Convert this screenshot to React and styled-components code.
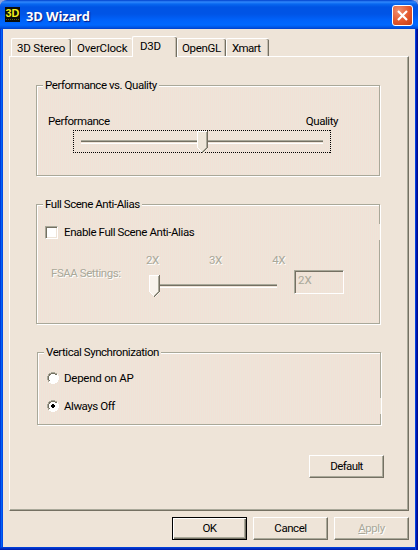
import React from 'react';
import styled, { createGlobalStyle, css } from 'styled-components';

const face = '#eee4d8';
const shade = '#a9a899';
const darkShade = '#747062';
const stripes = `#f1e1d6 url('data:image/svg+xml,<svg xmlns="http://www.w3.org/2000/svg" width="4" height="4" shape-rendering="crispEdges"><path d="M0 0h1v4h-1zM2 0h1v4h-1z" fill="%23ede5d9"/></svg>') 0 0 / 4px 4px`;

const GlobalStyle = createGlobalStyle`
  body {
    margin: 0;
    background: #8fa3dc;
    overflow: hidden;
  }

  * {
    box-sizing: border-box;
  }
`;

const Window = styled.div`
  width: 418px;
  height: 550px;
  display: flex;
  flex-direction: column;
  border-radius: 7px 7px 0 0;
  overflow: hidden;
  padding: 0 3px 3px;
  background:
    linear-gradient(#0046e0, #0018a8) 0 100% / 415px 3px no-repeat,
    linear-gradient(90deg, #0038d8 0 1px, #0064f4 1px 2px, #0048e8 2px 3px) 0 0 / 3px 100% no-repeat,
    linear-gradient(90deg, #0040e0 0 1px, #0018b0 1px 2px, #001090 2px 3px) 100% 0 / 3px 100% no-repeat;
  font-family: Roboto, 'Liberation Sans', sans-serif;
  font-size: 11.5px;
  line-height: 14px;
  color: #000;
`;

const TitleBar = styled.div`
  flex: none;
  height: 29px;
  margin: 0 -3px;
  padding: 0 5px;
  display: flex;
  align-items: flex-start;
  background: linear-gradient(
    #0040cc 0,
    #3088fc 2px,
    #0868f0 4px,
    #0054e4 7px,
    #0054e6 14px,
    #0062fa 20px,
    #0068ff 25px,
    #0058e8 27px,
    #0040cc 29px
  );
`;

const AppIcon = styled.svg`
  flex: none;
  margin-top: 7px;
`;

const Title = styled.h1`
  flex: 1;
  margin: 7px 0 0 6px;
  font-family: 'Open Sans', sans-serif;
  font-size: 13px;
  font-weight: 700;
  line-height: 18px;
  letter-spacing: -0.15px;
  color: #fff;
  text-shadow: 1px 1px 1px #0a1883;
`;

const CloseButton = styled.button`
  width: 21px;
  height: 21px;
  margin-top: 5px;
  padding: 0;
  border: 1px solid #fff;
  border-radius: 3px;
  background: radial-gradient(circle at 30% 25%, #f09070, #e4572c 55%, #c43c14);

  svg {
    display: block;
    margin: 3px;
  }
`;

const Client = styled.div`
  flex: 1;
  background: ${face};
`;

const Tabs = styled.div`
  display: flex;
  align-items: flex-end;
  height: 20px;
  margin: 7px 0 0 8px;
`;

const Tab = styled.div`
  width: ${props => props.$width}px;
  height: 18px;
  padding: 2px 0 0 ${props => props.$indent || 5}px;
  border: solid #fff;
  border-width: 1px 0 0 1px;
  border-radius: 2px 2px 0 0;
  box-shadow: ${props => (props.$noEdge ? 'none' : `inset -1px 0 0 ${darkShade}, inset -2px 0 0 #c4bcae`)};
  white-space: nowrap;
  letter-spacing: ${props => props.$spacing || -0.2}px;

  ${props => props.$active && css`
    height: 21px;
    margin-bottom: -1px;
    position: relative;
    background: ${face};
  `}
`;

const Panel = styled.div`
  width: 400px;
  height: 455px;
  margin-left: 6px;
  padding: 28px 0 0 26px;
  border: 1px solid;
  border-color: #fff ${darkShade} ${darkShade} #fff;
  box-shadow: inset -1px -1px 0 ${shade};
`;

const Group = styled.section`
  display: flex;
  flex-direction: column;
  align-items: flex-start;
  width: 344px;
  height: ${props => props.$height}px;
  margin: 0 0 28px ${props => props.$offset || 0}px;
  border: 1px solid ${shade};
  box-shadow: 1px 1px 0 #fff, inset 1px 1px 0 #fff;
  background: ${stripes};
`;

const Legend = styled.h2`
  margin: -8px 0 0 6px;
  padding: 0 2px;
  font-size: inherit;
  font-weight: 400;
  line-height: 14px;
  white-space: nowrap;
  letter-spacing: -0.45px;
  background: ${face};
`;

const Text = styled.span`
  white-space: nowrap;
  letter-spacing: ${props => props.$spacing || -0.45}px;

  ${props => props.$disabled && css`
    color: ${shade};
    text-shadow: 1px 1px 0 #fff;
  `}
`;

const RangeLabels = styled.div`
  display: flex;
  justify-content: space-between;
  width: 290px;
  margin: 22px 0 2px 11px;
`;

const FocusFrame = styled.div`
  width: 258px;
  height: 23px;
  margin-left: 36px;
  padding: 1px 8px 0;
  background:
    repeating-linear-gradient(90deg, #000 0 1px, transparent 1px 2px) 0 0 / 100% 1px no-repeat,
    repeating-linear-gradient(90deg, #000 0 1px, transparent 1px 2px) 0 100% / 100% 1px no-repeat,
    repeating-linear-gradient(#000 0 1px, transparent 1px 2px) 0 0 / 1px 100% no-repeat,
    repeating-linear-gradient(#000 0 1px, transparent 1px 2px) 100% 0 / 1px 100% no-repeat;
`;

const Track = styled.div`
  width: ${props => props.$width}px;
  height: 22px;
  margin-left: ${props => props.$start || 0}px;
  padding-left: ${props => props.$thumb}px;
  background:
    linear-gradient(${shade} 0 1px, ${darkShade} 1px 2px, ${face} 2px 3px, #fff 3px 4px)
    0 9px / 100% 4px no-repeat;

  svg {
    display: block;
  }
`;

const OptionRow = styled.label`
  display: flex;
  align-items: center;
  align-self: stretch;
  height: 16px;
  margin: ${props => props.$top}px ${props => (props.$over ? -1 : 0)}px 0 8px;
  background: ${props => (props.$over ? stripes : 'none')};
`;

const CheckBox = styled.span`
  width: 13px;
  height: 13px;
  margin-right: 6px;
  background: #fff;
  border: 1px solid;
  border-color: ${shade} #fff #fff ${shade};
  box-shadow: inset 1px 1px 0 ${darkShade}, inset -1px -1px 0 ${face};
`;

const RadioSvg = styled.svg`
  margin: 0 5px 0 1px;
`;

const Fsaa = styled.div`
  display: flex;
  align-items: flex-start;
  margin: 13px 0 0 14px;
`;

const FsaaLabel = styled.div`
  width: 95px;
  padding-top: 13px;
`;

const FsaaSlider = styled.div`
  width: 148px;
`;

const Marks = styled.div`
  display: flex;
  justify-content: space-between;
  width: 139px;
  margin-bottom: 8px;
`;

const Value = styled.div`
  width: 50px;
  height: 24px;
  margin-top: 17px;
  padding: 2px 3px;
  color: ${shade};
  border: 1px solid;
  border-color: ${shade} #fff #fff ${shade};
  box-shadow: inset 1px 1px 0 ${darkShade};
`;

const Button = styled.button`
  display: flex;
  justify-content: center;
  width: 75px;
  height: 23px;
  padding: 3px 0 0;
  font: inherit;
  color: #000;
  background: ${face};
  border: 1px solid;
  border-color: #fff ${darkShade} ${darkShade} #fff;
  box-shadow: inset -1px -1px 0 ${shade};

  ${props => props.$primary && css`
    border-color: #000;
    box-shadow: inset 1px 1px 0 #fff, inset -1px -1px 0 ${darkShade}, inset -2px -2px 0 ${shade};
  `}
`;

const DefaultButton = styled(Button)`
  margin: 30px 0 0 273px;
`;

const Footer = styled.div`
  display: flex;
  justify-content: flex-end;
  gap: 6px;
  margin: 6px 6px 0 0;
`;

const Thumb = ({ disabled }) => (
  <svg width="11" height="22" viewBox="0 0 11 22" shapeRendering="crispEdges">
    <path d="M0 0h11v17l-5 5h-1l-5-5z" fill={disabled ? '#f8f3ec' : '#eee6d9'} />
    <path d="M0 0h11v1h-10v16h-1zM1 17h1v1h-1zM2 18h1v1h-1zM3 19h1v1h-1zM4 20h1v1h-1z" fill="#fff" />
    <path d="M9 1h1v16h-1zM8 17h1v1h-1zM7 18h1v1h-1zM6 19h1v1h-1zM5 20h1v1h-1z" fill={shade} />
    <path d="M10 0h1v17h-1zM9 17h1v1h-1zM8 18h1v1h-1zM7 19h1v1h-1zM6 20h1v1h-1zM5 21h1v1h-1z" fill={darkShade} />
  </svg>
);

const Radio = ({ checked }) => (
  <RadioSvg width="12" height="12" viewBox="0 0 12 12" shapeRendering="crispEdges">
    <path d="M4 1h4v1h2v2h1v4h-1v2h-2v1h-4v-1h-2v-2h-1v-4h1v-2h2z" fill="#fff" />
    <path d="M4 0h4v1h-4zM2 1h2v1h-2zM8 1h2v1h-2zM1 2h1v2h-1zM0 4h1v4h-1zM1 8h1v2h-1z" fill={shade} />
    <path d="M4 1h4v1h-4zM2 2h2v1h-1v1h-1zM8 2h2v1h-2zM1 4h1v4h-1zM2 8h1v1h-1z" fill={darkShade} />
    <path d="M10 2h1v2h-1zM11 4h1v4h-1zM10 8h1v2h-1zM8 10h2v1h-2zM4 11h4v1h-4zM2 10h2v1h-2z" fill="#fff" />
    {checked && <path d="M5 4h2v1h1v2h-1v1h-2v-1h-1v-2h1z" fill="#000" />}
  </RadioSvg>
);

const App = () => (
  <>
    <GlobalStyle />
    <Window>
      <TitleBar>
        <AppIcon width="15" height="15" viewBox="0 0 15 15">
          <rect width="15" height="15" fill="#0b0c08" />
          <path d="M1 12.5h13" stroke="#55551a" strokeDasharray="1 1" />
          <text x="0.6" y="10" textLength="13.8" lengthAdjust="spacingAndGlyphs" fontFamily="Liberation Sans, sans-serif" fontWeight="700" fontSize="10" fill="#f4f01c">3D</text>
        </AppIcon>
        <Title>3D Wizard</Title>
        <CloseButton aria-label="Close">
          <svg width="13" height="13" viewBox="0 0 13 13">
            <path d="M2 2l9 9M11 2l-9 9" stroke="#fff" strokeWidth="2.2" />
          </svg>
        </CloseButton>
      </TitleBar>
      <Client>
        <Tabs>
          <Tab $width={60}>3D Stereo</Tab>
          <Tab $width={61} $noEdge>OverClock</Tab>
          <Tab $width={45} $indent={7} $active>D3D</Tab>
          <Tab $width={49} $indent={4} $spacing={-0.35}>OpenGL</Tab>
          <Tab $width={43} $spacing={-0.6}>Xmart</Tab>
        </Tabs>
        <Panel>
          <Group $height={91}>
            <Legend>Performance vs. Quality</Legend>
            <RangeLabels>
              <Text>Performance</Text>
              <Text>Quality</Text>
            </RangeLabels>
            <FocusFrame>
              <Track $width={242} $thumb={116}>
                <Thumb />
              </Track>
            </FocusFrame>
          </Group>

          <Group $height={120}>
            <Legend>Full Scene Anti-Alias</Legend>
            <OptionRow $top={13} $over>
              <CheckBox />
              <Text $spacing={-0.4}>Enable Full Scene Anti-Alias</Text>
            </OptionRow>
            <Fsaa>
              <FsaaLabel>
                <Text $disabled>FSAA Settings:</Text>
              </FsaaLabel>
              <FsaaSlider>
                <Marks>
                  <Text $disabled>2X</Text>
                  <Text $disabled>3X</Text>
                  <Text $disabled>4X</Text>
                </Marks>
                <Track $width={128} $start={3} $thumb={0}>
                  <Thumb disabled />
                </Track>
              </FsaaSlider>
              <Value>2X</Value>
            </Fsaa>
          </Group>

          <Group $height={73} $offset={1}>
            <Legend>Vertical Synchronization</Legend>
            <OptionRow $top={11}>
              <Radio />
              <Text $spacing={-0.25}>Depend on AP</Text>
            </OptionRow>
            <OptionRow $top={12} $over>
              <Radio checked />
              <Text>Always Off</Text>
            </OptionRow>
          </Group>

          <DefaultButton>
            <Text $spacing={-0.6}>Default</Text>
          </DefaultButton>
        </Panel>
        <Footer>
          <Button $primary>
            <Text>OK</Text>
          </Button>
          <Button>
            <Text>Cancel</Text>
          </Button>
          <Button>
            <Text $disabled><u>A</u>pply</Text>
          </Button>
        </Footer>
      </Client>
    </Window>
  </>
);

export default App;
